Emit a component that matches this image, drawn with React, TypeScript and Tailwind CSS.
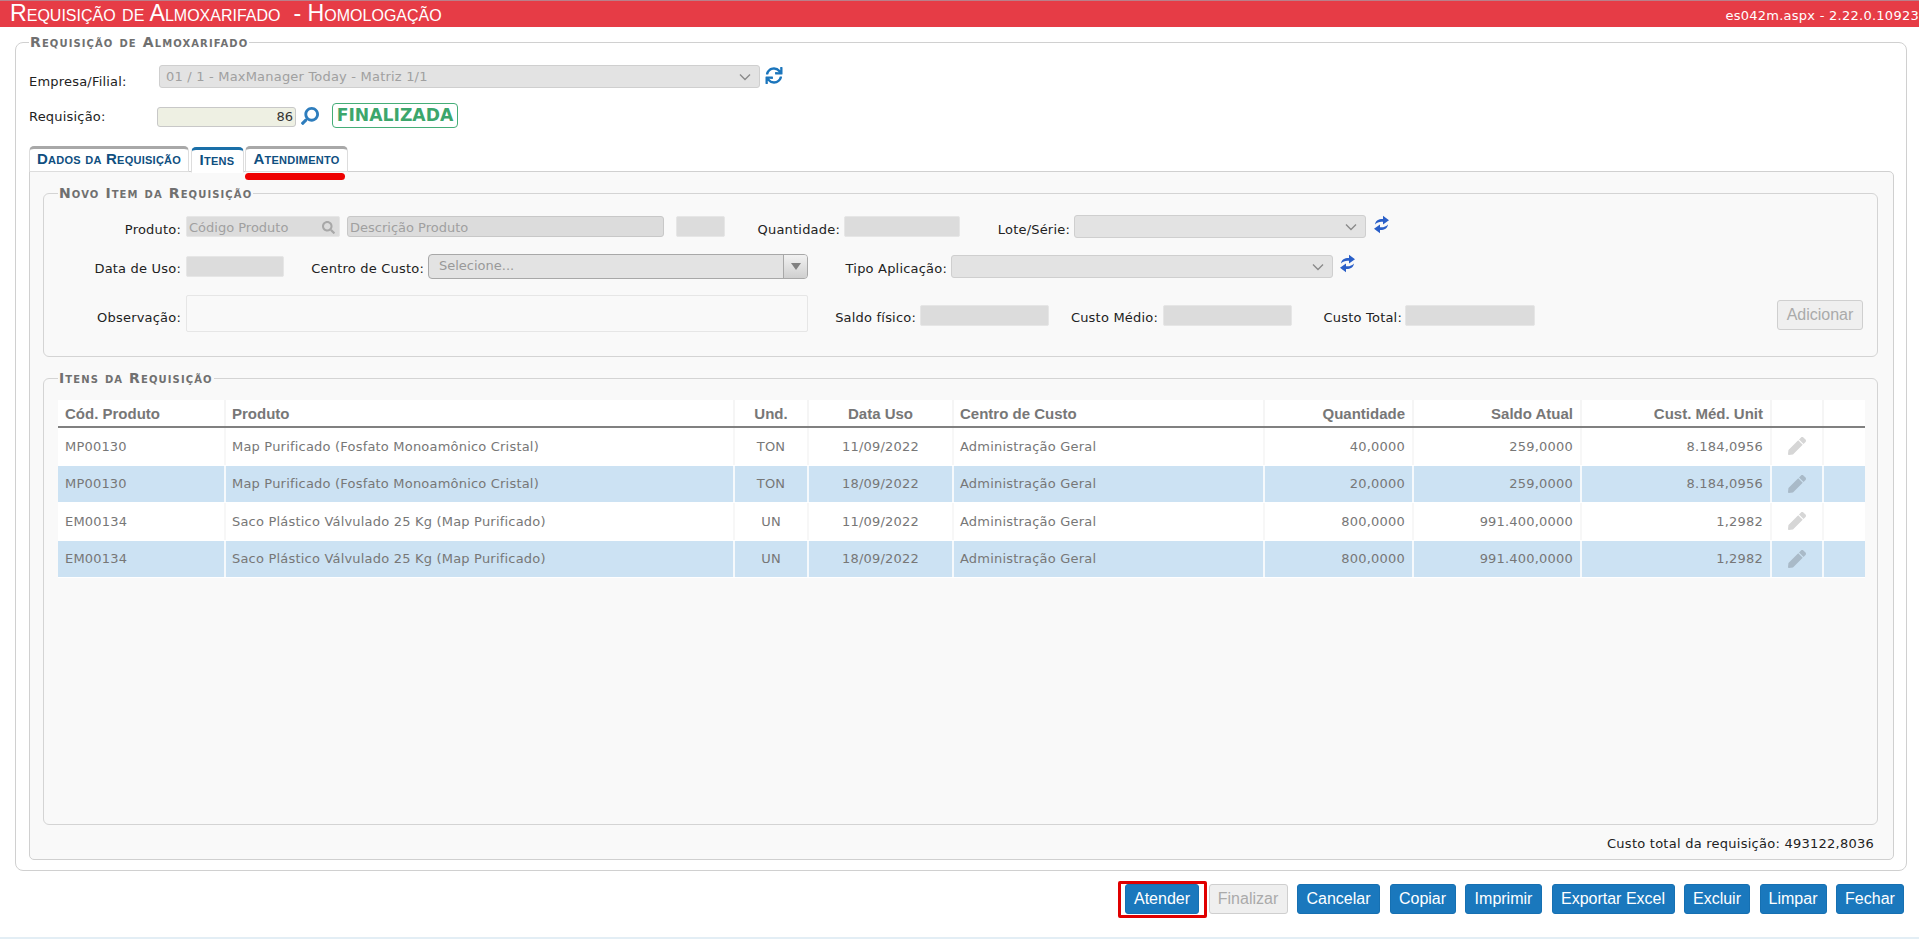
import React from "react";
import { FaSync, FaPen, FaSearch } from "react-icons/fa";

const label = "text-[13px] text-[#222] tracking-[0.2px] whitespace-nowrap text-right";
const box = "h-[21px] bg-[#dcdcdc] border border-[#e6e6e6] rounded-[2px] shrink-0";
const selectBox = "bg-[#e3e3e3] border border-[#cfcfcf] rounded-[3px] flex items-center justify-end pr-[8px] shrink-0";

const legendCls = "px-[1px] font-bold text-[14px] [font-variant:small-caps] text-[#707070] tracking-[1.1px] leading-[16px]";

const cols = [
  { t: "Cód. Produto", w: "w-[168px]", a: "text-left pl-[7px]" },
  { t: "Produto", w: "w-[509px]", a: "text-left pl-[6px]" },
  { t: "Und.", w: "w-[74px]", a: "text-center" },
  { t: "Data Uso", w: "w-[145px]", a: "text-center" },
  { t: "Centro de Custo", w: "w-[311px]", a: "text-left pl-[6px]" },
  { t: "Quantidade", w: "w-[149px]", a: "text-right pr-[7px]" },
  { t: "Saldo Atual", w: "w-[168px]", a: "text-right pr-[7px]" },
  { t: "Cust. Méd. Unit", w: "w-[190px]", a: "text-right pr-[7px]" },
  { t: "", w: "w-[52px]", a: "text-center" },
  { t: "", w: "w-[41px]", a: "text-center" },
];

const map = "Map Purificado (Fosfato Monoamônico Cristal)";
const saco = "Saco Plástico Válvulado 25 Kg (Map Purificado)";
const adm = "Administração Geral";
const rows = [
  ["MP00130", map, "TON", "11/09/2022", adm, "40,0000", "259,0000", "8.184,0956"],
  ["MP00130", map, "TON", "18/09/2022", adm, "20,0000", "259,0000", "8.184,0956"],
  ["EM00134", saco, "UN", "11/09/2022", adm, "800,0000", "991.400,0000", "1,2982"],
  ["EM00134", saco, "UN", "18/09/2022", adm, "800,0000", "991.400,0000", "1,2982"],
];

const buttons = [
  { t: "Cancelar", w: "w-[83px]" },
  { t: "Copiar", w: "w-[66px]" },
  { t: "Imprimir", w: "w-[77px]" },
  { t: "Exportar Excel", w: "w-[123px]" },
  { t: "Excluir", w: "w-[66px]" },
  { t: "Limpar", w: "w-[67px]" },
  { t: "Fechar", w: "w-[68px]" },
];
const btn = "h-[30px] bg-[#1a78bd] text-white text-[16px] rounded-[3px] border border-[#1670b2] flex items-center justify-center shrink-0";

function Chevron() {
  return (
    <svg width="12" height="8" viewBox="0 0 12 8" className="shrink-0">
      <path d="M1 1.5 L6 6.5 L11 1.5" fill="none" stroke="#8a8a8a" strokeWidth="1.4" />
    </svg>
  );
}

function Swap({ cls }: { cls: string }) {
  return (
    <svg viewBox="0 0 15 19" className={cls} fill="#2a5fc8">
      <path d="M1 9.5 C1.5 5.5 5 3.8 9 4 L9 0.8 L15 5.2 L9 9.6 L9 6.8 C6 6.4 3 7.2 1 9.5 Z" />
      <path d="M14 9.5 C13.5 13.5 10 15.2 6 15 L6 18.2 L0 13.8 L6 9.4 L6 12.2 C9 12.6 12 11.8 14 9.5 Z" />
    </svg>
  );
}

export default function App() {
  return (
    <div className="w-[1919px] h-[939px] overflow-hidden bg-white flex flex-col font-['DejaVu_Sans',sans-serif]">
      <header className="h-[27px] shrink-0 border-t border-[#b9808a] bg-[#e63c46] flex items-center justify-between pl-[10px]">
        <h1 className="text-[23.2px] leading-none text-white [font-variant:small-caps] font-['Liberation_Sans',sans-serif] whitespace-pre">
          Requisição de Almoxarifado  - Homologação
        </h1>
        <span className="text-[13px] tracking-[0.26px] text-white whitespace-nowrap pt-[3px]">es042m.aspx - 2.22.0.10923</span>
      </header>

      <fieldset className="mt-[7px] ml-[15px] w-[1892px] h-[837px] shrink-0 border border-[#d0d0d0] rounded-[8px] pl-[13px] pr-[12px]">
        <legend className={legendCls}>Requisição de Almoxarifado</legend>

        <div className="flex items-start mt-[15px] h-[23px]">
          <span className={`${label} w-[130px] text-left! pt-[7px]`}>Empresa/Filial:</span>
          <div className={`${selectBox} w-[601px] h-[23px] justify-between! pl-[6px] pr-[4px] text-[13px] text-[#a0a0a0]`}>
            <span className="tracking-[0.2px]">01 / 1 - MaxManager Today - Matriz 1/1</span>
            <Chevron />
          </div>
          <FaSync className="ml-[5px] mt-[2px] w-[18px] h-[17px] text-[#1b75bc]" />
        </div>

        <div className="flex items-center mt-[15px] h-[25px]">
          <span className={`${label} w-[128px] text-left! pt-[3px]`}>Requisição:</span>
          <div className="mt-[2px] w-[139px] h-[20px] bg-[#eef0e3] border border-[#c8c8c8] rounded-[3px] text-right pr-[2px] text-[13px] leading-[18px] text-[#333] shrink-0">86</div>
          <FaSearch className="ml-[5px] w-[18px] h-[18px] text-[#2e7dbd] -scale-x-100" />
          <div className="ml-[13px] w-[126px] h-[25px] border border-[#45ad78] rounded-[4px] flex items-center justify-center text-[17.2px] font-bold text-[#3ca66c] whitespace-nowrap">FINALIZADA</div>
        </div>

        <div className="relative flex items-end mt-[18px] h-[26px] gap-[1.5px] font-['Liberation_Sans',sans-serif] font-bold text-[15px] tracking-[0.25px] [font-variant:small-caps] text-[#0f4f80]">
          <div className="w-[160px] h-[26px] pb-[2px] bg-white border border-[#ddd] border-t-[3px] border-t-[#a8a8a8] rounded-t-[5px] flex items-center justify-center whitespace-nowrap">Dados da Requisição</div>
          <div className="w-[53px] h-[26px] pb-[2px] bg-white border border-[#ddd] border-t-[3px] border-t-[#1a6fa8] border-b-white rounded-t-[5px] flex items-center justify-center z-10 mb-[-1px]">Itens</div>
          <div className="w-[103px] h-[26px] pb-[2px] bg-white border border-[#ddd] border-t-[3px] border-t-[#a8a8a8] rounded-t-[5px] flex items-center justify-center">Atendimento</div>
          <div className="absolute left-[216px] top-[27px] w-[100px] h-[7px] bg-[#ee0000] rounded-full z-20" />
        </div>

        <div className="w-[1865px] h-[689px] bg-[#f9f9f9] border border-[#d0d0d0] rounded-b-[5px] rounded-tr-[5px] pt-[13px] pl-[13px] pr-[15px] -mt-[1px]">
          <fieldset className="h-[172px] border border-[#d4d4d4] rounded-[6px] pl-[10px]">
            <legend className={`${legendCls} ml-[4px]`}>Novo Item da Requisição</legend>

            <div className="flex items-start mt-[15px] h-[23px]">
              <span className={`${label} w-[127px] pt-[4px]`}>Produto:</span>
              <div className="ml-[5px] w-[154px] h-[21px] bg-[#dcdcdc] border border-[#e6e6e6] rounded-[2px] shrink-0 flex items-center justify-between pl-[2px] pr-[4px] pt-[2px] text-[13px] text-[#a0a0a0]">
                <span>Código Produto</span>
                <FaSearch className="w-[13px] h-[13px] text-[#a8a8a8]" />
              </div>
              <div className="ml-[7px] w-[317px] h-[21px] bg-[#dcdcdc] border border-[#c8c8c8] rounded-[3px] shrink-0 pl-[2px] text-[13px] leading-[21px] text-[#a0a0a0]">Descrição Produto</div>
              <div className={`ml-[12px] w-[49px] ${box}`} />
              <span className={`${label} w-[115px] pt-[4px]`}>Quantidade:</span>
              <div className={`ml-[4px] w-[116px] ${box}`} />
              <span className={`${label} w-[110px] pt-[4px]`}>Lote/Série:</span>
              <div className={`${selectBox} ml-[4px] w-[292px] h-[23px] -mt-[1px]`}><Chevron /></div>
              <Swap cls="ml-[8px] -mt-[1px] w-[15px] h-[19px] shrink-0" />
            </div>

            <div className="flex items-start mt-[15px] h-[25px]">
              <span className={`${label} w-[127px] pt-[5px]`}>Data de Uso:</span>
              <div className={`ml-[5px] mt-[2px] w-[98px] ${box}`} />
              <span className={`${label} w-[140px] pt-[5px]`}>Centro de Custo:</span>
              <div className="ml-[4px] w-[380px] h-[25px] bg-[#e3e3e3] border border-[#a8a8a8] rounded-[4px] flex shrink-0 overflow-hidden">
                <span className="flex-1 pl-[10px] text-[13px] leading-[21px] text-[#999]">Selecione...</span>
                <span className="w-[24px] border-l border-[#a8a8a8] bg-gradient-to-b from-[#f2f2f2] to-[#cfcfcf] flex items-center justify-center">
                  <svg width="10" height="7" viewBox="0 0 10 7"><path d="M0 0 H10 L5 7 Z" fill="#808080" /></svg>
                </span>
              </div>
              <span className={`${label} w-[139px] pt-[5px]`}>Tipo Aplicação:</span>
              <div className={`${selectBox} ml-[4px] mt-[1px] w-[382px] h-[23px]`}><Chevron /></div>
              <Swap cls="ml-[7px] w-[15px] h-[19px] shrink-0" />
            </div>

            <div className="flex items-start mt-[16px] h-[37px]">
              <span className={`${label} w-[127px] pt-[13px]`}>Observação:</span>
              <div className="ml-[5px] w-[622px] h-[37px] border border-[#e6e6e6] rounded-[2px] shrink-0" />
              <span className={`${label} w-[108px] pt-[13px]`}>Saldo físico:</span>
              <div className={`ml-[4px] mt-[10px] w-[129px] ${box}`} />
              <span className={`${label} w-[109px] pt-[13px]`}>Custo Médio:</span>
              <div className={`ml-[5px] mt-[10px] w-[129px] ${box}`} />
              <span className={`${label} w-[110px] pt-[13px]`}>Custo Total:</span>
              <div className={`ml-[3px] mt-[10px] w-[130px] ${box}`} />
              <div className="ml-[242px] mt-[5px] w-[86px] h-[30px] bg-[#efefef] border border-[#cfcfcf] rounded-[3px] flex items-center justify-center font-['Liberation_Sans',sans-serif] text-[16px] text-[#aaaaaa] shrink-0">Adicionar</div>
            </div>
          </fieldset>

          <fieldset className="mt-[13px] h-[455px] border border-[#d4d4d4] rounded-[6px] pl-[14px]">
            <legend className={legendCls}>Itens da Requisição</legend>
            <div className="mt-[14px] w-[1807px]">
              <div className="flex h-[28px] bg-white border-b-2 border-[#808080] font-['Liberation_Sans',sans-serif] font-bold text-[15px] text-[#777]">
                {cols.map((c, i) => (
                  <div key={i} className={`${c.w} ${c.a} leading-[27px] border-r-2 border-[#f5f5f5] shrink-0 last:border-r-0`}>{c.t}</div>
                ))}
              </div>
              {rows.map((r, ri) => (
                <div key={ri} className={`flex h-[37.5px] border-b border-white text-[13px] text-[#777] tracking-[0.2px] ${ri % 2 ? "bg-[#cce2f3]" : "bg-white"}`}>
                  {cols.map((c, i) => (
                    <div key={i} className={`${c.w} ${c.a} flex items-center ${i === 2 || i === 3 ? "justify-center" : i >= 5 && i <= 7 ? "justify-end" : ""} ${i === 8 ? "justify-center" : ""} border-r-2 ${ri % 2 ? "border-[#f5f9fc]" : "border-[#f7f7f7]"} shrink-0 whitespace-nowrap last:border-r-0`}>
                      {i < 8 ? r[i] : i === 8 ? <FaPen className={`w-[18px] h-[18px] ${ri % 2 ? "text-[#a9bac8]" : "text-[#d6d6d6]"}`} /> : null}
                    </div>
                  ))}
                </div>
              ))}
            </div>
          </fieldset>

          <div className="mt-[9px] text-right pr-[4px] text-[13px] text-[#222] tracking-[0.25px]">Custo total da requisição: 493122,8036</div>
        </div>
      </fieldset>

      <div className="relative flex items-start mt-[13px] pl-[1125px] gap-[9.5px] font-['Liberation_Sans',sans-serif]">
        <div className={`${btn} w-[74px]`}>Atender</div>
        <div className="absolute left-[1118px] -top-[3px] w-[89px] h-[37px] border-[3px] border-[#e00000] rounded-[2px]" />
        <div className="h-[30px] w-[79px] bg-[#efefef] border border-[#cfcfcf] rounded-[3px] text-[16px] text-[#aaa] flex items-center justify-center shrink-0">Finalizar</div>
        {buttons.map((b) => (
          <div key={b.t} className={`${btn} ${b.w}`}>{b.t}</div>
        ))}
      </div>
      <div className="mt-auto h-[2px] bg-[#e3eef5]" />
    </div>
  );
}
